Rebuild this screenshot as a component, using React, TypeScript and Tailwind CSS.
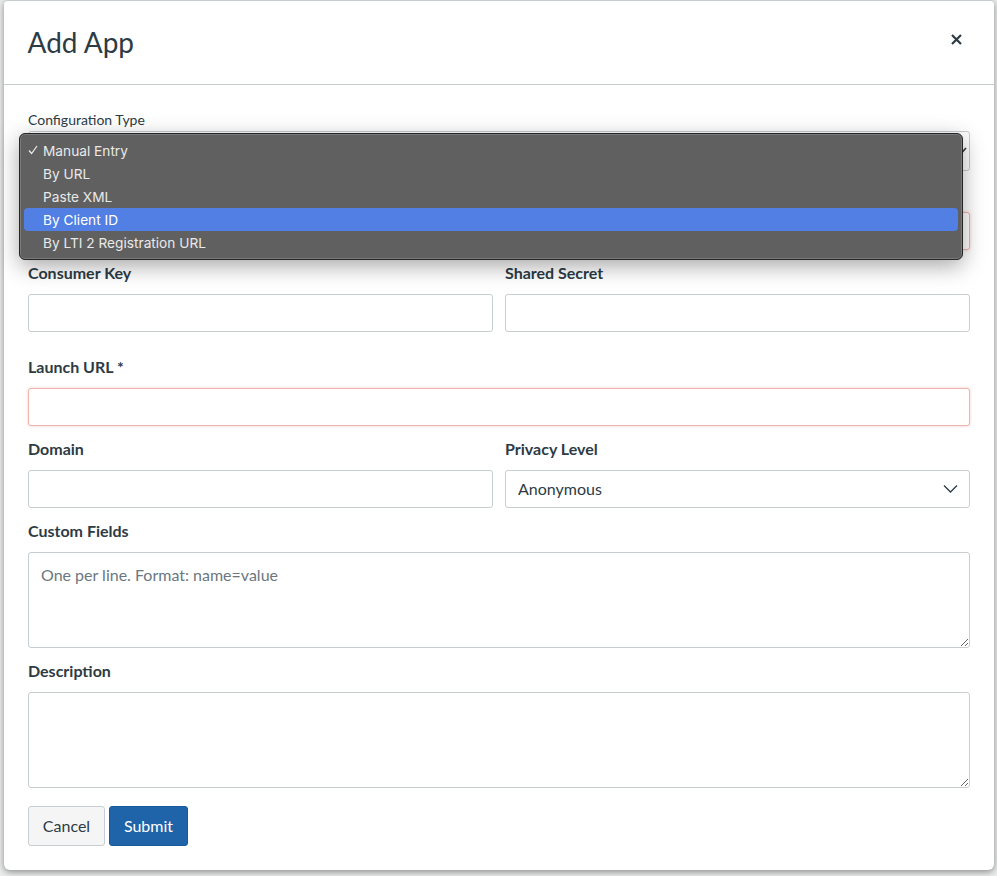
import React from "react";

const labelCls = "block text-[16px] leading-[21px] font-bold text-[#2d3b45] mb-[11px]";
const inputCls = "block w-full h-[38px] bg-white border border-[#c7cdd1] rounded-[3px] px-3 text-[16px] text-[#2d3b45] outline-none";
const errorCls = "block w-full h-[38px] bg-white border border-[#eeb4ae] rounded-[3px] px-3 text-[16px] text-[#2d3b45] outline-none shadow-[0_0_3px_rgba(238,100,90,0.35)]";
const areaCls = "block w-full h-[96px] bg-white border border-[#c7cdd1] rounded-[3px] px-3 py-[10px] text-[16px] leading-[24px] text-[#2d3b45] outline-none placeholder:text-[#6b7780]";

function Chevron() {
  return (
    <svg className="absolute right-[12px] top-[14px] pointer-events-none" width="15" height="10" viewBox="0 0 15 10" fill="none">
      <path d="M1 1.5 L7.5 8 L14 1.5" stroke="#2d3b45" strokeWidth="1.3" />
    </svg>
  );
}

const options = ["Manual Entry", "By URL", "Paste XML", "By Client ID", "By LTI 2 Registration URL"];

export default function App() {
  return (
    <div className="w-[997px] h-[876px] bg-[#eceded] overflow-hidden relative" style={{ fontFamily: "Lato, 'Liberation Sans', sans-serif" }}>
      <div className="relative ml-[4px] w-[990px] h-[870px] bg-white rounded-b-[6px] rounded-t-[4px] border-t border-[#c7cdd1] shadow-[0_2px_7px_rgba(0,0,0,0.42)]">
        <header className="h-[84px] border-b border-[#c7cdd1] flex items-center justify-between pl-[23.5px] pr-[32px]">
          <h1 className="text-[28px] leading-[36px] font-normal text-[#2d3b45] -mt-[1px]">Add App</h1>
          <svg width="11" height="11" viewBox="0 0 11 11" className="-mt-[7px]">
            <path d="M1 1 L10 10 M10 1 L1 10" stroke="#2d3b45" strokeWidth="2.2" />
          </svg>
        </header>

        <form className="px-[24px]">
          <div className="pt-[25px]">
            <label className="block text-[14px] leading-[20px] text-[#2d3b45] mb-[1px]">Configuration Type</label>
            <div className="relative">
              <select defaultValue="Manual Entry" className="block w-full h-[40px] appearance-none bg-white border border-[#c7cdd1] rounded-[3px] px-3 text-[16px] text-[#2d3b45] outline-none">
                {options.map((o) => (
                  <option key={o}>{o}</option>
                ))}
              </select>
              <svg className="absolute right-[3px] top-[16px] pointer-events-none" width="12" height="8" viewBox="0 0 12 8" fill="none">
                <path d="M1 1 L6 6.5 L11 1" stroke="#2d3b45" strokeWidth="1.6" />
              </svg>
            </div>
          </div>

          <div className="mt-[41px]">
            <input aria-label="Name" className={errorCls} />
          </div>

          <div className="grid grid-cols-2 gap-x-[12px] mt-[12px]">
            <div>
              <label className={labelCls}>Consumer Key</label>
              <input className={inputCls} />
            </div>
            <div>
              <label className={labelCls}>Shared Secret</label>
              <input className={inputCls} />
            </div>
          </div>

          <div className="mt-[24px]">
            <label className={labelCls}>Launch URL *</label>
            <input className={errorCls} />
          </div>

          <div className="grid grid-cols-2 gap-x-[12px] mt-[12px]">
            <div>
              <label className={labelCls}>Domain</label>
              <input className={inputCls} />
            </div>
            <div>
              <label className={labelCls}>Privacy Level</label>
              <div className="relative">
                <select defaultValue="Anonymous" className={inputCls + " appearance-none"}>
                  <option>Anonymous</option>
                  <option>Name Only</option>
                  <option>Public</option>
                </select>
                <Chevron />
              </div>
            </div>
          </div>

          <div className="mt-[12px]">
            <label className={labelCls}>Custom Fields</label>
            <textarea className={areaCls} placeholder="One per line. Format: name=value" />
          </div>

          <div className="mt-[12px]">
            <label className={labelCls}>Description</label>
            <textarea className={areaCls} />
          </div>

          <div className="flex gap-[4px] mt-[18px]">
            <button type="button" className="h-[40px] w-[77px] bg-[#f5f5f5] border border-[#c7cdd1] rounded-[3px] text-[16px] text-[#2d3b45]">Cancel</button>
            <button type="button" className="h-[40px] w-[79px] bg-[#1f64a8] border border-[#1a5a99] rounded-[3px] text-[16px] text-white">Submit</button>
          </div>
        </form>

        <div className="absolute left-[15px] top-[132px] w-[944px] h-[127px] bg-[#606060] border border-[#262626] rounded-[6px] px-[4px] pt-[5px] shadow-[0_6px_22px_rgba(0,0,0,0.35)] ring-1 ring-[#7a7a7a] ring-inset" style={{ fontFamily: "Inter, 'Liberation Sans', sans-serif" }}>
          {options.map((o, i) => (
            <div key={o} className={"relative h-[23px] rounded-[4px] pl-[19px] pt-[1px] text-[13.7px] leading-[23px] text-[#e9e9e9] " + (i === 3 ? "bg-[#527fe3] text-white" : "")}>
              {i === 0 && (
                <svg className="absolute left-[4px] top-[6px]" width="10" height="10" viewBox="0 0 10 10" fill="none">
                  <path d="M1 5.5 L3.6 8.5 L9 1" stroke="#eeeeee" strokeWidth="1.2" />
                </svg>
              )}
              {o}
            </div>
          ))}
        </div>
      </div>
    </div>
  );
}
